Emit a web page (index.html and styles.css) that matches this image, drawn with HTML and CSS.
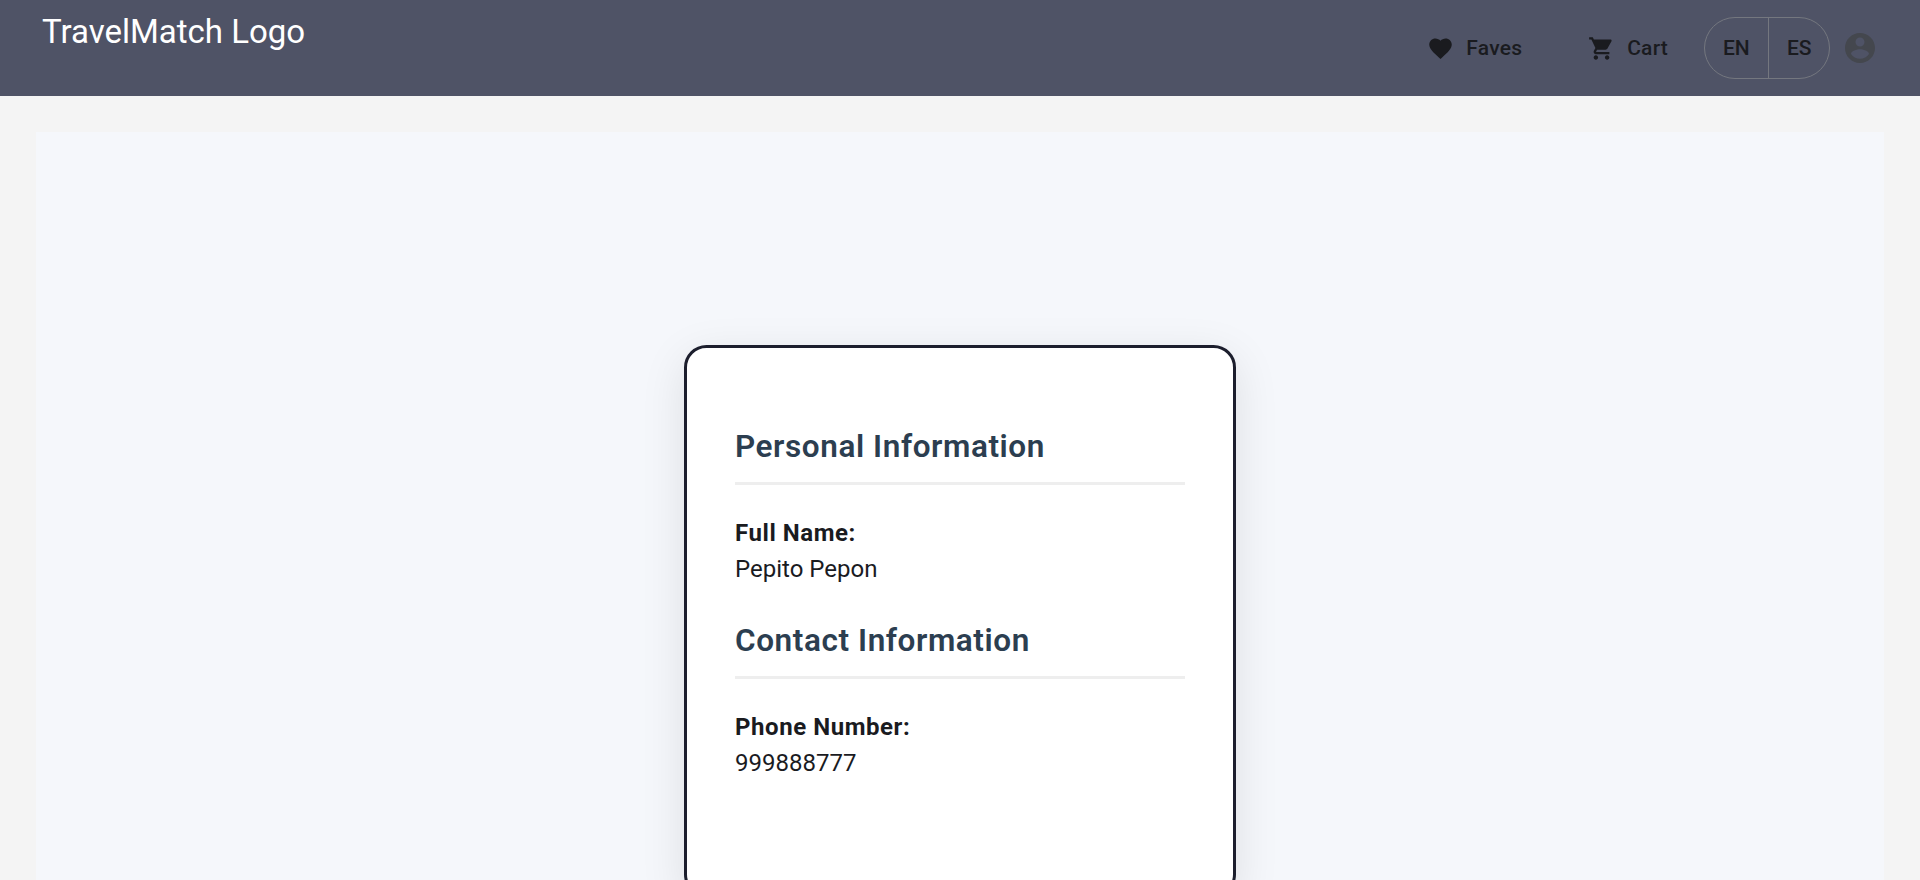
FILE: index.html
```html
<!DOCTYPE html>
<html lang="en">
<head>
<meta charset="utf-8">
<title>TravelMatch</title>
<link rel="stylesheet" href="styles.css">
</head>
<body>
<header class="toolbar">
  <div class="logo">TravelMatch Logo</div>
  <nav class="actions">
    <a class="nav-button">
      <svg class="icon" viewBox="0 0 24 24"><path d="M12 21.35l-1.45-1.32C5.4 15.36 2 12.28 2 8.5 2 5.42 4.42 3 7.5 3c1.74 0 3.41.81 4.5 2.09C13.09 3.81 14.76 3 16.5 3 19.58 3 22 5.42 22 8.5c0 3.78-3.4 6.86-8.55 11.54L12 21.35z"/></svg>
      <span>Faves</span>
    </a>
    <a class="nav-button">
      <svg class="icon" viewBox="0 0 24 24"><path d="M7 18c-1.1 0-1.99.9-1.99 2S5.9 22 7 22s2-.9 2-2-.9-2-2-2zM1 2v2h2l3.6 7.59-1.35 2.45c-.16.28-.25.61-.25.96 0 1.1.9 2 2 2h12v-2H7.42c-.14 0-.25-.11-.25-.25l.03-.12.9-1.63h7.45c.75 0 1.41-.41 1.75-1.03l3.58-6.49c.08-.14.12-.31.12-.48 0-.55-.45-1-1-1H5.21l-.94-2H1zm16 16c-1.1 0-1.99.9-1.99 2s.89 2 1.99 2 2-.9 2-2-.9-2-2-2z"/></svg>
      <span>Cart</span>
    </a>
    <div class="language">
      <span class="language-option">EN</span>
      <span class="language-option">ES</span>
    </div>
    <svg class="account" viewBox="0 0 24 24"><path d="M12 2C6.48 2 2 6.48 2 12s4.48 10 10 10 10-4.48 10-10S17.52 2 12 2zm0 3c1.66 0 3 1.34 3 3s-1.34 3-3 3-3-1.34-3-3 1.34-3 3-3zm0 14.2c-2.5 0-4.71-1.28-6-3.22.03-1.99 4-3.08 6-3.08 1.99 0 5.97 1.09 6 3.08-1.29 1.94-3.5 3.22-6 3.22z"/></svg>
  </nav>
</header>
<main class="page">
  <div class="profile">
    <section class="card">
      <h2 class="heading">Personal Information</h2>
      <p class="field"><strong class="label">Full Name:</strong><span>Pepito Pepon</span></p>
      <h2 class="heading">Contact Information</h2>
      <p class="field"><strong class="label">Phone Number:</strong><span>999888777</span></p>
    </section>
  </div>
</main>
</body>
</html>
```
FILE: styles.css
```css
* { box-sizing: border-box; }

body {
  display: flex;
  flex-direction: column;
  margin: 0;
  height: 880px;
  overflow: hidden;
  background: #f4f4f4;
  color: #1a1b1f;
  font-family: Roboto, sans-serif;
}

.toolbar {
  display: flex;
  flex: none;
  justify-content: space-between;
  height: 96px;
  padding: 0 42px;
  background: #4f5366;
}

.logo {
  padding-top: 12px;
  color: #fff;
  font-size: 33px;
  line-height: 39px;
}

.actions {
  display: flex;
  align-items: center;
}

.nav-button {
  display: flex;
  align-items: center;
  gap: 12px;
  margin-right: 66px;
  font-size: 21px;
  font-weight: 500;
  letter-spacing: 0.22px;
}

.nav-button + .nav-button { margin-right: 36px; }

.icon {
  width: 27px;
  height: 27px;
  fill: currentColor;
}

.language {
  display: flex;
  width: 126px;
  height: 62px;
  margin-right: 12px;
  border: 1px solid #74777f;
  border-radius: 31px;
  font-size: 21px;
  font-weight: 500;
  line-height: 61px;
}

.language-option {
  flex: none;
  width: 63px;
  padding-left: 18px;
}

.language-option + .language-option { width: 61px; border-left: 1px solid #74777f; }

.account {
  width: 36px;
  height: 36px;
  fill: #44474e;
}

.page {
  flex: 1;
  min-height: 0;
  padding: 36px 36px 0;
  overflow: hidden;
}

.profile {
  display: flex;
  justify-content: center;
  height: 980px;
  padding-top: 213px;
  background: #f5f7fb;
}

.card {
  width: 552px;
  height: 552px;
  padding: 78px 48px 48px;
  border: 3px solid #1c1e2d;
  border-radius: 22.5px;
  background: #fff;
  box-shadow: 0 12px 45px rgba(0, 0, 0, 0.1);
}

.heading {
  margin: 0 0 30px;
  padding-bottom: 15px;
  border-bottom: 3px solid #eee;
  color: #2c3e50;
  font-size: 31.5px;
  font-weight: 600;
  line-height: 41px;
  letter-spacing: 0.58px;
}

.field {
  display: flex;
  flex-direction: column;
  margin: 0 0 33px;
  font-size: 24px;
  line-height: 36px;
}

.label {
  font-weight: 700;
  letter-spacing: 0.56px;
}
```
